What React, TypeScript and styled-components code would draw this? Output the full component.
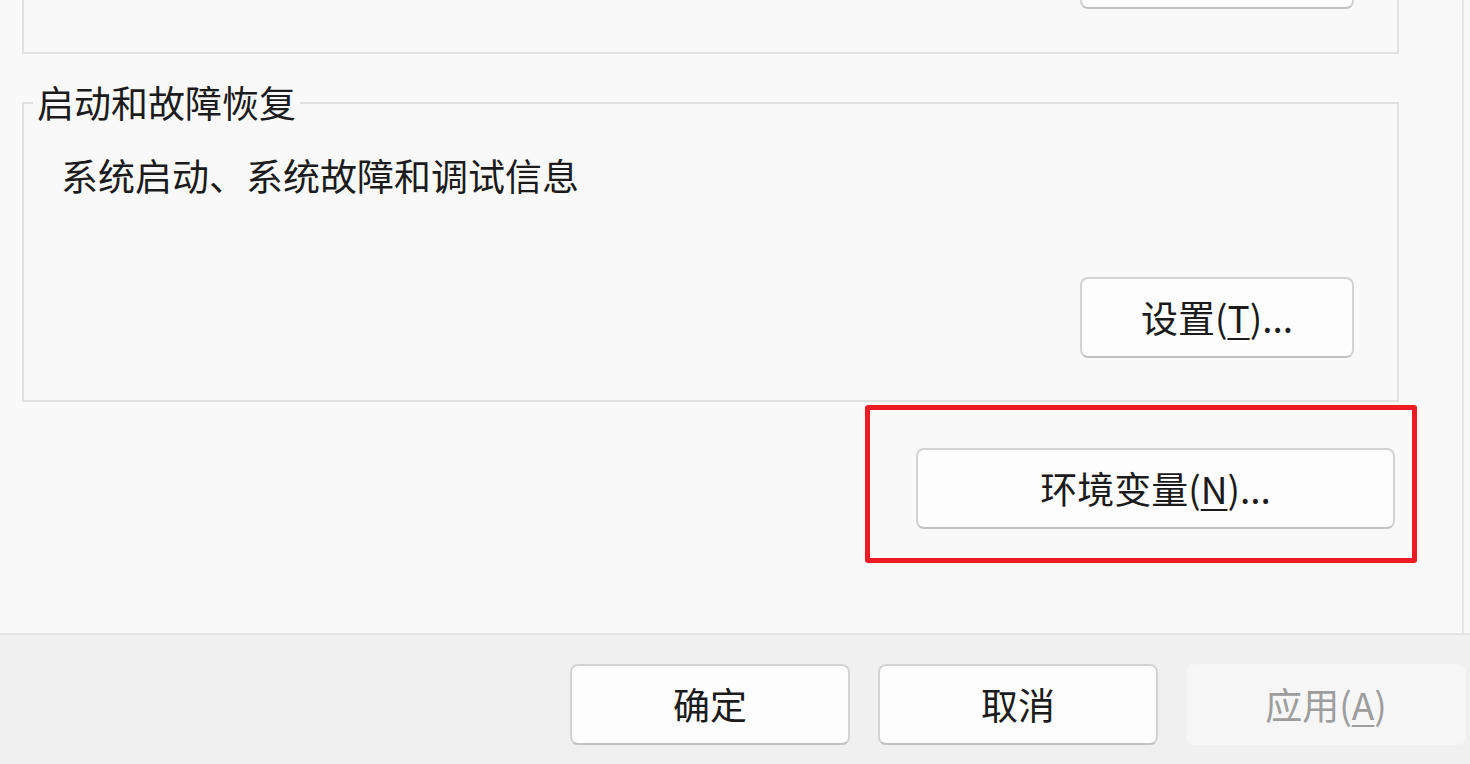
import React from "react";
import styled, { createGlobalStyle } from "styled-components";

const Global = createGlobalStyle`
  html, body { margin: 0; padding: 0; background: #f9f9f9; overflow: hidden; }
  body { font-family: "Noto Sans CJK SC", "Noto Sans", sans-serif; color: #1b1b1b; }
  * { box-sizing: border-box; }
`;

const Page = styled.div`
  width: 1470px;
  height: 764px;
  display: flex;
  flex-direction: column;
  overflow: hidden;
`;

const Panel = styled.div`
  width: 1464px;
  height: 633px;
  background: #f9f9f9;
  border-right: 2px solid #e6e6e6;
  display: flex;
  flex-direction: column;
  padding-left: 22px;
`;

const TopGroup = styled.div`
  margin-top: -100px;
  width: 1377px;
  height: 154px;
  border: 2px solid #e1e1e1;
  display: flex;
  align-items: flex-end;
  justify-content: flex-end;
  padding: 0 43px 43px 0;
`;

const Group = styled.fieldset`
  margin: 27px 0 0 0;
  width: 1377px;
  height: 321px;
  border: 2px solid #e1e1e1;
  padding: 0 43px 42px 9px;
  min-width: 0;
`;

const Legend = styled.legend`
  font-size: 37px;
  line-height: 43px;
  padding: 0 4px;
  margin: 0;
`;

const Description = styled.div`
  font-size: 37px;
  line-height: 43px;
  margin: 30px 0 0 28px;
`;

const Button = styled.button<{ $w: number; $disabled?: boolean }>`
  width: ${(p) => p.$w}px;
  height: 81px;
  border-radius: 8px;
  border: 2px solid ${(p) => (p.$disabled ? "#f5f5f5" : "#d3d3d3")};
  border-bottom-color: ${(p) => (p.$disabled ? "#f5f5f5" : "#c2c2c2")};
  background: ${(p) => (p.$disabled ? "#f6f6f6" : "#fdfdfd")};
  color: ${(p) => (p.$disabled ? "#9d9d9d" : "#1b1b1b")};
  font-family: "Noto Sans CJK SC", "Noto Sans", sans-serif;
  font-size: 37px;
  line-height: 43px;
  padding: 0;
  display: flex;
  align-items: center;
  justify-content: center;
  flex: none;
`;

const Mn = styled.span`
  text-decoration: underline;
  text-underline-offset: 5px;
  text-decoration-thickness: 2px;
`;

const RightRow = styled.div`
  margin-top: 80px;
  display: flex;
  justify-content: flex-end;
`;

const Highlight = styled.div`
  margin: 3px 45px 0 auto;
  width: 552px;
  height: 158px;
  border: 5px solid #ed1c24;
  border-radius: 3px;
  padding: 38px 18px 0 46px;
  display: flex;
`;

const Footer = styled.div`
  flex: 1;
  background: #f0f0f0;
  border-top: 2px solid #e4e4e4;
  display: flex;
  justify-content: flex-end;
  gap: 28px;
  padding: 29px 4px 0 0;
`;

export default function App() {
  return (
    <Page>
      <Global />
      <Panel>
        <TopGroup>
          <Button $w={274} aria-label="高级设置" />
        </TopGroup>
        <Group>
          <Legend>启动和故障恢复</Legend>
          <Description>系统启动、系统故障和调试信息</Description>
          <RightRow>
            <Button $w={274}>
              设置(<Mn>T</Mn>)...
            </Button>
          </RightRow>
        </Group>
        <Highlight>
          <Button $w={479}>
            环境变量(<Mn>N</Mn>)...
          </Button>
        </Highlight>
      </Panel>
      <Footer>
        <Button $w={280}>确定</Button>
        <Button $w={280}>取消</Button>
        <Button $w={280} $disabled>
          应用(<Mn>A</Mn>)
        </Button>
      </Footer>
    </Page>
  );
}
